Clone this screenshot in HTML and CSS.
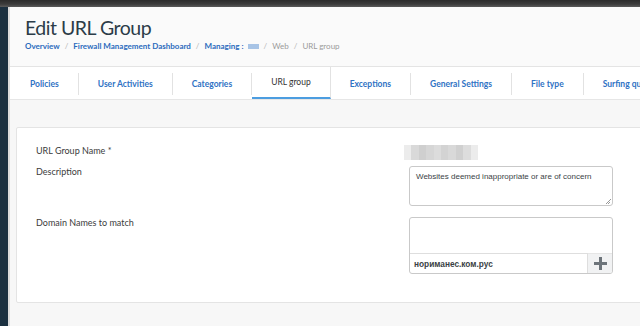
FILE: index.html
```html
<!DOCTYPE html>
<html lang="en">
<head>
<meta charset="utf-8">
<title>Edit URL Group</title>
<link rel="stylesheet" href="styles.css">
</head>
<body>
<div class="topbar"></div>
<div class="app">
  <aside class="sidebar"></aside>
  <main class="main">
    <header class="page-header">
      <h1 class="title">Edit URL Group</h1>
      <nav class="crumbs">
        <a class="crumb">Overview</a><span class="sep">/</span>
        <a class="crumb">Firewall Management Dashboard</a><span class="sep">/</span>
        <a class="crumb">Managing :</a><span class="crumb-blur"></span><span class="sep">/</span>
        <span class="crumb-muted">Web</span><span class="sep">/</span>
        <span class="crumb-muted">URL group</span>
      </nav>
    </header>
    <div class="tabs">
      <a class="tab">Policies</a>
      <a class="tab">User Activities</a>
      <a class="tab">Categories</a>
      <a class="tab active">URL group</a>
      <a class="tab">Exceptions</a>
      <a class="tab">General Settings</a>
      <a class="tab">File type</a>
      <a class="tab">Surfing quotas</a>
    </div>
    <section class="content">
      <div class="card">
        <div class="row row-name">
          <label class="label">URL Group Name *</label>
          <div class="blurred"><span></span><span></span><span></span><span></span><span></span><span></span><span></span><span></span><span></span><span></span></div>
        </div>
        <div class="row row-desc">
          <label class="label">Description</label>
          <div class="textarea">Websites deemed inappropriate or are of concern<span class="grip"></span></div>
        </div>
        <div class="row">
          <label class="label">Domain Names to match</label>
          <div class="domain-box">
            <div class="domain-list"></div>
            <div class="domain-input">
              <div class="input">нориманес.ком.рус</div>
              <button class="add-btn" type="button">
                <svg width="13" height="13" viewBox="0 0 13 13"><path d="M5 0h3v5h5v3H8v5H5V8H0V5h5z" fill="#6d747a"/></svg>
              </button>
            </div>
          </div>
        </div>
      </div>
    </section>
  </main>
</div>
</body>
</html>
```
FILE: styles.css
```css
* { box-sizing: border-box; }
html, body { margin: 0; padding: 0; }
body {
  width: 640px;
  height: 326px;
  overflow: hidden;
  font-family: Lato, "Noto Sans", sans-serif;
  color: #333;
  background: #f7f7f7;
}
.topbar {
  height: 7px;
  background: linear-gradient(#2b2b2b, #3c3c3c 60%, #5a5a5a);
}
.app {
  display: flex;
  height: 319px;
}
.sidebar {
  width: 10px;
  flex: none;
  background: #1b3040;
  border-right: 2px solid #dcdcdc;
}
.main {
  flex: 1;
  min-width: 0;
  display: flex;
  flex-direction: column;
}
.page-header {
  background: #fafafa;
  padding: 9px 0 0 15px;
  height: 59px;
}
.title {
  margin: 0;
  font-size: 19.5px;
  font-weight: 400;
  letter-spacing: -0.5px;
  line-height: 24px;
  color: #2c3c48;
}
.crumbs {
  margin-top: 0;
  font-size: 8px;
  line-height: 12px;
  white-space: nowrap;
  display: flex;
  align-items: center;
}
.crumb { color: #2b6bbd; font-weight: 700; }
.crumb-muted { color: #9a9a9a; }
.sep { color: #b5b5b5; margin: 0 5px; }
.crumb-blur {
  display: inline-block;
  width: 11px;
  height: 5px;
  margin-left: 4px;
  background: #a8c4e6;
}
.tabs {
  display: flex;
  background: #fff;
  border-top: 1px solid #e4e4e4;
  border-bottom: 1px solid #e6e6e6;
  height: 34px;
  white-space: nowrap;
}
.tab {
  position: relative;
  display: flex;
  align-items: center;
  padding: 0 19px;
  font-size: 8.5px;
  font-weight: 700;
  color: #2f72c4;
  border-right: 1px solid #e2e2e2;
  margin: 6px 0 4px;
}
.tab:nth-child(1) { padding: 0 19px 0 20px; }
.tab.active {
  color: #333;
  font-weight: 400;
  margin: 0;
  padding: 5px 19px 5px;
  border-bottom: 2px solid #4c9de0;
  border-right: 1px solid #e2e2e2;
}
.tab:last-child { border-right: none; }
.content {
  flex: 1;
  background: #f7f7f7;
  padding: 27px 0 0 6px;
}
.card {
  width: 660px;
  background: #fff;
  border: 1px solid #e4e4e4;
  border-radius: 2px;
  padding: 17px 0 28px 19px;
}
.row {
  display: flex;
  align-items: flex-start;
}
.row-name { margin-bottom: 6px; }
.row-desc { margin-bottom: 11px; }
.label {
  width: 368px;
  flex: none;
  font-size: 9px;
  line-height: 12px;
  color: #3b3b3b;
}
.blurred {
  display: flex;
  width: 74px;
  height: 15px;
}
.blurred span { flex: 1; background: #d4d4d4; }
.blurred span:nth-child(1) { background: #ececec; }
.blurred span:nth-child(2) { background: #d9d9d9; }
.blurred span:nth-child(3) { background: #cfcfcf; }
.blurred span:nth-child(4) { background: #d6d6d6; }
.blurred span:nth-child(5) { background: #dcdcdc; }
.blurred span:nth-child(6) { background: #d3d3d3; }
.blurred span:nth-child(7) { background: #d9d9d9; }
.blurred span:nth-child(8) { background: #d0d0d0; }
.blurred span:nth-child(9) { background: #dddddd; }
.blurred span:nth-child(10) { background: #ececec; }
.textarea {
  position: relative;
  margin-left: 5px;
  width: 204px;
  height: 40px;
  border: 1px solid #c9c9c9;
  border-radius: 3px;
  padding: 4px 6px;
  font-family: "Liberation Sans", Arial, sans-serif;
  font-size: 8px;
  line-height: 11px;
  color: #3a3f45;
  white-space: nowrap;
}
.grip {
  position: absolute;
  right: 1px;
  bottom: 1px;
  width: 5px;
  height: 5px;
  background: linear-gradient(135deg, transparent 45%, #999 45%, #999 55%, transparent 55%, transparent 70%, #999 70%, #999 80%, transparent 80%);
}
.domain-box {
  margin-left: 5px;
  width: 204px;
  height: 57px;
  border: 1px solid #c9c9c9;
  border-radius: 3px;
  display: flex;
  flex-direction: column;
  overflow: hidden;
}
.domain-list { flex: 1; }
.domain-input {
  display: flex;
  height: 20px;
}
.input {
  flex: 1;
  border-top: 1px solid #dedede;
  border-right: 1px solid #dedede;
  padding: 0 4px;
  display: flex;
  align-items: center;
  font-family: "Liberation Sans", Arial, sans-serif;
  font-size: 8.3px;
  font-weight: 700;
  color: #3a3f45;
}
.add-btn {
  width: 24px;
  border: none;
  border-top: 1px solid #e6e6e6;
  background: #f1f2f3;
  padding: 0;
  display: flex;
  align-items: center;
  justify-content: center;
}
```
